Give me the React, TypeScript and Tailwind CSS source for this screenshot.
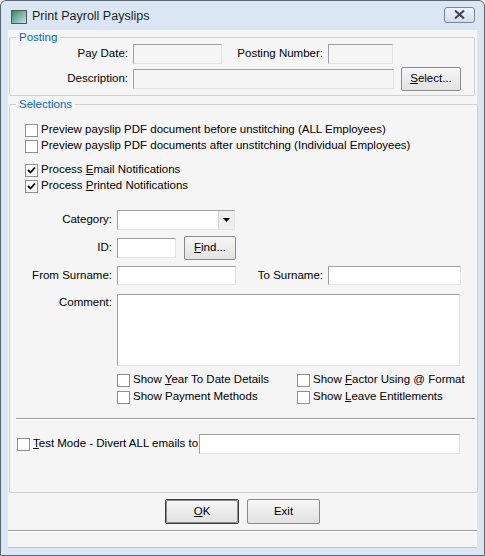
import React from "react";

const F = { fontFamily: '"Liberation Sans", Arial, sans-serif' };

function Input({ w, h = 20, grey = false }: { w: number; h?: number; grey?: boolean }) {
  return (
    <div
      className={`border border-t-[#a0a0a0] border-l-[#a0a0a0] border-b-[#e3e3e3] border-r-[#e3e3e3] ${grey ? "bg-[#f5f5f5]" : "bg-white"}`}
      style={{ width: w, height: h }}
    />
  );
}

function Btn({ w, h, children }: { w: number; h: number; children: React.ReactNode }) {
  return (
    <div
      className="flex items-center justify-center border border-[#8a8a8a] rounded-[2px] bg-gradient-to-b from-[#f6f6f6] to-[#e2e2e2] text-[11.5px] text-black"
      style={{ width: w, height: h }}
    >
      {children}
    </div>
  );
}

function Check({ checked = false }: { checked?: boolean }) {
  return (
    <div className="w-[13px] h-[13px] border border-[#8e8f8f] bg-white flex items-center justify-center shrink-0">
      {checked && (
        <svg width="9" height="9" viewBox="0 0 9 9">
          <path d="M1 4 L3.5 6.5 L8 1.5" stroke="#000" strokeWidth="1.8" fill="none" />
        </svg>
      )}
    </div>
  );
}

function CheckRow({ checked, children, className = "" }: { checked?: boolean; children: React.ReactNode; className?: string }) {
  return (
    <div className={`flex items-center h-[16px] gap-[3px] ${className}`}>
      <Check checked={checked} />
      <span className="text-[11.5px] text-black whitespace-nowrap">{children}</span>
    </div>
  );
}

function Label({ w, children }: { w: number; children: React.ReactNode }) {
  return (
    <div className="text-right text-[11.5px] text-black pr-[5px] shrink-0" style={{ width: w }}>
      {children}
    </div>
  );
}

export default function App() {
  return (
    <div style={F} className="w-[485px] h-[556px] bg-[#dbe6f4] border border-[#5b6673] rounded-t-[6px] flex flex-col text-black">
      <div className="h-[29px] flex items-center px-[10px] shrink-0">
        <div className="w-[16px] h-[14px] border border-[#555] bg-gradient-to-br from-[#2b8a5a] to-[#c8e0f0] mr-[4px] mt-[2px]" />
        <span className="text-[12.5px] text-[#1e1e1e] ml-[1px] mt-[2px]">Print Payroll Payslips</span>
        <div className="flex-1" />
        <div className="w-[31px] h-[16px] border border-[#7a8796] rounded-[3px] bg-gradient-to-b from-[#eef3f9] to-[#d3dde9] flex items-center justify-center mt-[-2px] mr-[-1px]">
          <svg width="11" height="9" viewBox="0 0 11 9">
            <path d="M1 0.5 L10 8.5 M10 0.5 L1 8.5" stroke="#3a4552" strokeWidth="2" />
          </svg>
        </div>
      </div>
      <div className="mx-[7px] h-[518px] bg-[#f5f5f5] border-b border-[#b8c5d6] flex flex-col">
        <fieldset className="ml-[1px] w-[466px] border border-[#d0d0d0] h-[66px] rounded-[2px]">
          <legend className="ml-[6px] px-[3px] text-[11.5px] text-[#0066cc] leading-[14px]">Posting</legend>
          <div className="flex items-center">
            <Label w={123}>Pay Date:</Label>
            <Input w={89} grey />
            <Label w={106}>Posting Number:</Label>
            <Input w={65} grey />
          </div>
          <div className="flex items-center mt-[3px]">
            <Label w={123}>Description:</Label>
            <Input w={261} grey />
            <div className="ml-[7px]">
              <Btn w={60} h={24}><span><u>S</u>elect...</span></Btn>
            </div>
          </div>
        </fieldset>
        <fieldset className="ml-[1px] mt-[1px] w-[466px] border border-[#d0d0d0] h-[396px] rounded-[2px]">
          <legend className="ml-[6px] px-[3px] text-[11.5px] text-[#0066cc] leading-[14px]">Selections</legend>
          <div className="pl-[15px] mt-[11px]">
            <CheckRow>Preview payslip PDF document before unstitching (ALL Employees)</CheckRow>
            <CheckRow>Preview payslip PDF documents after unstitching (Individual Employees)</CheckRow>
            <CheckRow checked className="mt-[8px]">Process <u>E</u>mail Notifications</CheckRow>
            <CheckRow checked>Process <u>P</u>rinted Notifications</CheckRow>
          </div>
          <div className="flex items-center mt-[16px]">
            <Label w={107}>Category:</Label>
            <div className="w-[118px] h-[20px] border border-t-[#a0a0a0] border-l-[#a0a0a0] border-b-[#e3e3e3] border-r-[#e3e3e3] bg-white flex justify-end">
              <div className="w-[16px] h-[18px] bg-[#efefef] border-l border-[#d0d0d0] flex items-center justify-center">
                <svg width="7" height="4" viewBox="0 0 7 4"><path d="M0 0 H7 L3.5 4 Z" fill="#000" /></svg>
              </div>
            </div>
          </div>
          <div className="flex items-center mt-[6px]">
            <Label w={107}>ID:</Label>
            <Input w={59} />
            <div className="ml-[8px]"><Btn w={52} h={24}><span><u>F</u>ind...</span></Btn></div>
          </div>
          <div className="flex items-center mt-[6px]">
            <Label w={107}>From Surname:</Label>
            <Input w={119} h={19} />
            <Label w={92}>To Surname:</Label>
            <Input w={133} h={19} />
          </div>
          <div className="flex items-start mt-[9px]">
            <Label w={107}>Comment:</Label>
            <Input w={343} h={72} />
          </div>
          <div className="grid grid-cols-[180px_180px] ml-[107px] mt-[6px] gap-y-[1px]">
            <CheckRow>Show <u>Y</u>ear To Date Details</CheckRow>
            <CheckRow>Show <u>F</u>actor Using @ Format</CheckRow>
            <CheckRow>Show Payment Methods</CheckRow>
            <CheckRow>Show <u>L</u>eave Entitlements</CheckRow>
          </div>
          <div className="ml-[6px] mt-[13px] w-[459px] h-[2px] border-t border-[#a0a0a0] border-b border-b-white" />
          <div className="flex items-center mt-[14px] pl-[7px]">
            <div className="w-[182px]"><CheckRow><u>T</u>est Mode - Divert ALL emails to:</CheckRow></div>
            <Input w={261} />
          </div>
        </fieldset>
        <div className="flex justify-center gap-[8px] mt-[6px]">
          <div className="border border-[#3c3c3c] rounded-[2px]"><Btn w={72} h={23}><span><u>O</u>K</span></Btn></div>
          <Btn w={73} h={25}>Exit</Btn>
        </div>
        <div className="mt-[6px] h-[2px] border-t border-[#a0a0a0] border-b border-b-white" />
      </div>
    </div>
  );
}
